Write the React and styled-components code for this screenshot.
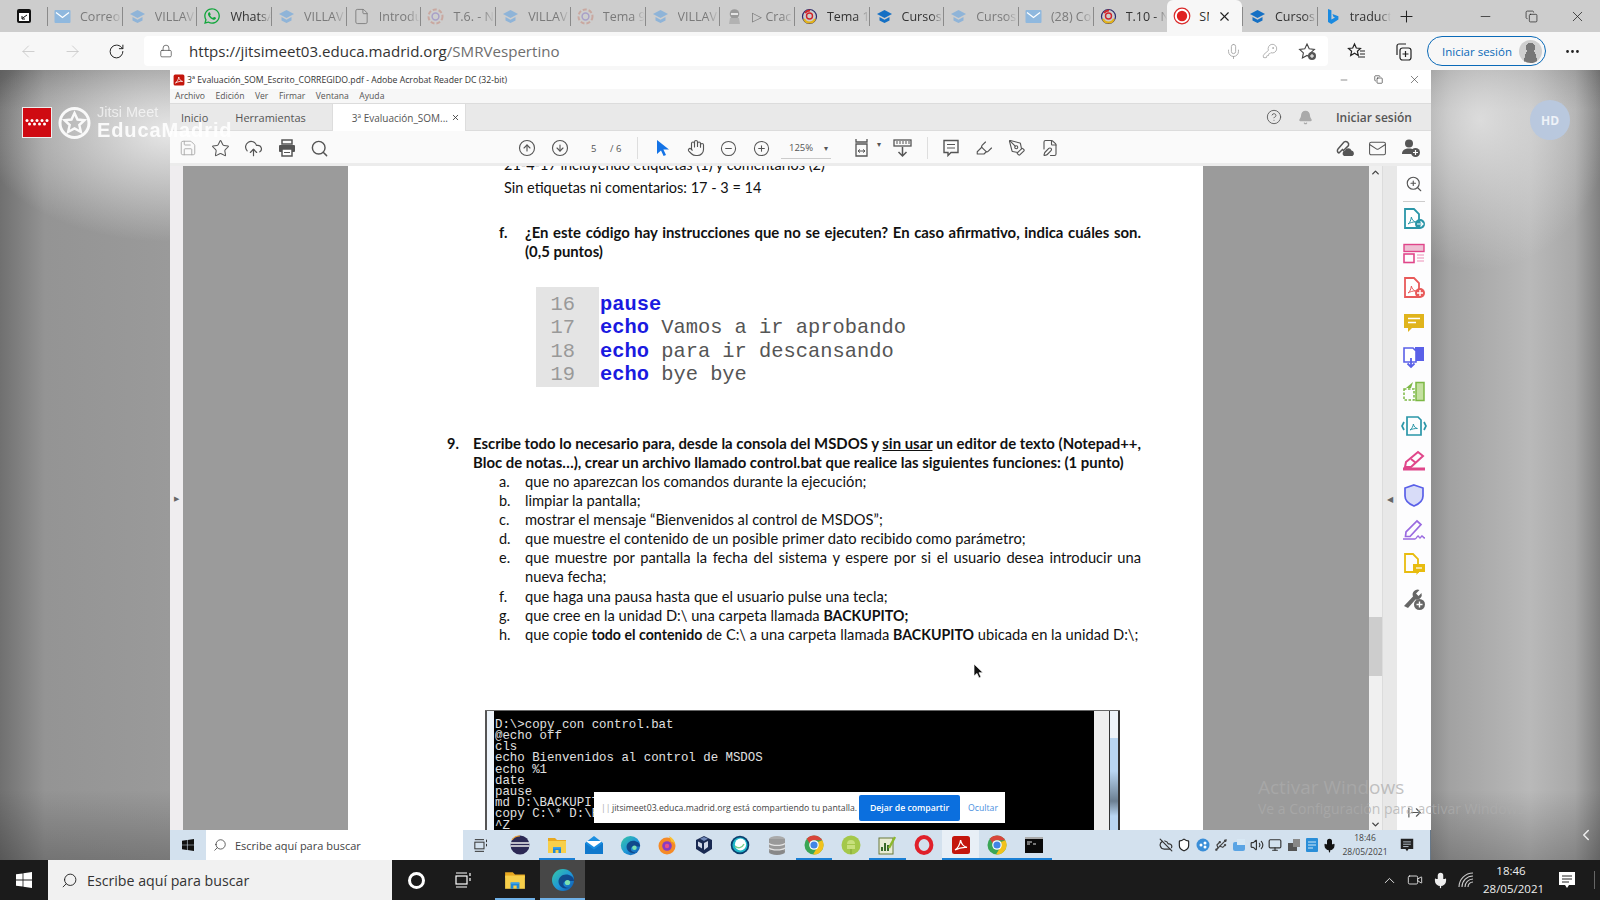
import React from 'react';
import styled, { createGlobalStyle } from 'styled-components';
import { FaWhatsapp } from 'react-icons/fa';
import {
  ArrowLeft, ArrowRight, RotateCw, Lock, Mic, KeyRound, Star, Plus, X, Minus, Copy, Ellipsis,
  CircleHelp, Bell, Save, CloudUpload, Search, CircleArrowUp, CircleArrowDown,
  Hand, CircleMinus, CirclePlus, Highlighter, PenTool, FilePen, Mail,
  ZoomIn, ArrowRightFromLine, ChevronUp, ChevronDown, ChevronLeft,
  Volume2, Usb, Monitor, CloudOff, Shield, Video, File,
} from 'lucide-react';

/* small drawn icons */
function MailIcon() {
  return (
    <svg width="17" height="17" viewBox="0 0 17 17">
      <rect x="0.5" y="2" width="16" height="13" rx="1" fill="#8fb8de" />
      <path d="M2 4.5l6.5 5 6.5-5" fill="none" stroke="#fff" strokeWidth="1.3" />
    </svg>
  );
}

function CapIcon({ dim }) {
  const fill = dim ? '#8fb4d8' : '#1570c4';
  return (
    <svg width="17" height="17" viewBox="0 0 17 17">
      <path d="M8.5 2L16 6l-7.5 4L1 6z" fill={fill} />
      <path d="M3.5 9v3.5l5 2.5 5-2.5V9l-5 2.8z" fill={fill} />
    </svg>
  );
}

function WheelIcon() {
  return (
    <svg width="17" height="17" viewBox="0 0 17 17" fill="none">
      <circle cx="8.5" cy="8.5" r="7" stroke="#c9a8a0" strokeWidth="2" strokeDasharray="4 2" />
      <circle cx="8.5" cy="8.5" r="3.4" stroke="#a8a0c8" strokeWidth="1.5" />
    </svg>
  );
}

function WheelBoldIcon() {
  return (
    <svg width="17" height="17" viewBox="0 0 17 17" fill="none">
      <circle cx="8.5" cy="8.5" r="7" stroke="#2a2a6a" strokeWidth="1.2" />
      <path d="M3 11a6 6 0 0 0 11 0" stroke="#e2b21c" strokeWidth="2" />
      <path d="M4 5a6 6 0 0 1 5-2.4" stroke="#d0242a" strokeWidth="2" />
      <circle cx="8.5" cy="8" r="3" stroke="#d0242a" strokeWidth="1.4" />
    </svg>
  );
}

function GhostIcon() {
  return (
    <svg width="17" height="17" viewBox="0 0 17 17">
      <circle cx="8.5" cy="6" r="4.8" fill="#9a9a9a" />
      <path d="M4 10h9l1 6H3z" fill="#b2b2b2" />
      <rect x="5" y="5" width="7" height="2" fill="#e4e4e4" />
    </svg>
  );
}

function RecIcon() {
  return (
    <svg width="18" height="18" viewBox="0 0 18 18">
      <circle cx="9" cy="9" r="7.8" fill="#fff" stroke="#d92a2a" strokeWidth="1.2" />
      <circle cx="9" cy="9" r="5.2" fill="#e02020" />
    </svg>
  );
}

function BingIcon() {
  return (
    <svg width="17" height="17" viewBox="0 0 17 17">
      <path d="M4 1l3.4 1.2v9.4l3.6-2-1.6-.9-1-2.6 6 2.1v3.2L7.4 16 4 14z" fill="#1a8ae0" />
    </svg>
  );
}

function StarPlus() {
  return (
    <svg width="19" height="19" viewBox="0 0 19 19" fill="none" stroke="#444" strokeWidth="1.1">
      <path d="M9 2l2.200 4.800 5.200.6-3.800 3.500 1 5.100L9 13.400 4.400 16l1-5.100L1.600 7.400l5.200-.6z" />
      <circle cx="14" cy="14" r="4" fill="#555" stroke="none" />
      <path d="M12 14h4M14 12v4" stroke="#fff" strokeWidth="1" />
    </svg>
  );
}

function FavList() {
  return (
    <svg width="19" height="19" viewBox="0 0 19 19" fill="none" stroke="#222" strokeWidth="1.200">
      <path d="M7.500 2l1.800 4 4.200.5-3.100 2.800.9 4.200-3.800-2.200-3.800 2.200.9-4.200L1.500 6.500l4.200-.5z" />
      <path d="M13 9h5M13 12h5M11 15h7" />
    </svg>
  );
}

function Collections() {
  return (
    <svg width="19" height="19" viewBox="0 0 19 19" fill="none" stroke="#222" strokeWidth="1.200">
      <path d="M4 13V4a2 2 0 0 1 2-2h7" />
      <rect x="7" y="6" width="11" height="12" rx="2.500" />
      <path d="M12.500 9v6M9.500 12h6" />
    </svg>
  );
}

function WindowsLogo({ size = 16, color = '#fff' }) {
  return (
    <svg width={size} height={size} viewBox="0 0 16 16" fill={color}>
      <path d="M0 2.3L6.6 1.4v6.2H0zM7.4 1.3L16 0v7.6H7.4zM0 8.4h6.6v6.2L0 13.7zM7.4 8.4H16V16l-8.6-1.3z" />
    </svg>
  );
}

function EdgeLogo({ size = 22, id = 'e' }) {
  return (
    <svg width={size} height={size} viewBox="0 0 24 24">
      <defs>
        <linearGradient id={id} x1="0" y1="0" x2="1" y2="1">
          <stop offset="0" stopColor="#37c9a4" />
          <stop offset="0.55" stopColor="#1f96d8" />
          <stop offset="1" stopColor="#0c4fa8" />
        </linearGradient>
      </defs>
      <circle cx="12" cy="12" r="11" fill={`url(#${id})`} />
      <path d="M23 13c0-4-4-6.5-8-6.5-4.5 0-7.5 3.5-7.5 7 0 4 3.5 7 7 7 1 0 2.5-.3 3.5-.8-2 .4-5.6-.6-5.6-3.6 0-1.8 1.5-3 3-3h7.4z" fill="#0e3d80" opacity="0.85" />
      <circle cx="16.5" cy="14.5" r="2.6" fill="#7be0b0" />
    </svg>
  );
}

function FolderLogo({ size = 20 }) {
  return (
    <svg width={size} height={size} viewBox="0 0 20 20">
      <path d="M1 3h7l2 2h9v3H1z" fill="#e8a820" />
      <rect x="1" y="6" width="18" height="12" fill="#f7cf4a" />
      <path d="M6 18v-5h8v5h-2.5v-3h-3v3z" fill="#1f88d8" />
      <rect x="6" y="12" width="8" height="1.6" fill="#3aa0e8" />
    </svg>
  );
}

function ChromeLogo() {
  return (
    <svg width="20" height="20" viewBox="0 0 20 20">
      <circle cx="10" cy="10" r="9.5" fill="#3aa655" />
      <path d="M10 .5a9.5 9.5 0 0 1 8.3 4.8H10a4.8 4.8 0 0 0-4.4 3L2.8 3.8A9.5 9.5 0 0 1 10 .5z" fill="#d8453a" />
      <path d="M18.3 5.3A9.5 9.5 0 0 1 9 19.4l4.2-7A4.8 4.8 0 0 0 13.9 7z" fill="#f2c21c" />
      <circle cx="10" cy="10" r="4.8" fill="#fff" />
      <circle cx="10" cy="10" r="3.6" fill="#4285e4" />
    </svg>
  );
}

function EclipseLogo() {
  return (
    <svg width="20" height="20" viewBox="0 0 20 20">
      <circle cx="10" cy="10" r="9.5" fill="#2c2955" />
      <path d="M1 8h18M.6 11h18.8" stroke="#eee" strokeWidth="1.6" />
      <path d="M2 5a9 9 0 0 1 8-4" stroke="#f0a030" strokeWidth="1.2" fill="none" />
    </svg>
  );
}

function MailApp() {
  return (
    <svg width="20" height="20" viewBox="0 0 20 20">
      <path d="M1 8l9-7 9 7v11H1z" fill="#1b8ee0" />
      <path d="M3 7l7 5 7-5v-1H3z" fill="#fff" />
      <path d="M1 8l9 6.5L19 8v11H1z" fill="#0f78cc" />
    </svg>
  );
}

function FirefoxLogo() {
  return (
    <svg width="20" height="20" viewBox="0 0 20 20">
      <circle cx="10" cy="11" r="8.5" fill="#f58a26" />
      <path d="M12 1c4 2 6 5 6.2 9-1-2-2.5-3-4-3.4z" fill="#fbc02d" />
      <circle cx="10" cy="11" r="4.8" fill="#8a3bc4" />
      <circle cx="10" cy="11" r="2.2" fill="#e84e8a" />
    </svg>
  );
}

function BoxLogo() {
  return (
    <svg width="20" height="20" viewBox="0 0 20 20">
      <path d="M10 1l8 4v9l-8 5-8-5V5z" fill="#1a2a52" />
      <path d="M10 8l4-2v6l-4 3zM4 6.5l4 2v5l-4-2.5z" fill="#d0d8e8" />
      <path d="M6 3.8L10 2l4 1.8L10 6z" fill="#7088b8" />
    </svg>
  );
}

function RingLogo() {
  return (
    <svg width="20" height="20" viewBox="0 0 20 20">
      <circle cx="10" cy="10" r="9.3" fill="#0b3f6e" />
      <circle cx="10" cy="10" r="7.6" fill="#1fb5c8" />
      <ellipse cx="10.5" cy="9.5" rx="5.6" ry="6" fill="#fff" />
      <path d="M5 11c3 3 7 2 9-2" stroke="#7bd08a" strokeWidth="1.4" fill="none" />
    </svg>
  );
}

function DbLogo() {
  return (
    <svg width="20" height="20" viewBox="0 0 20 20">
      <ellipse cx="10" cy="4" rx="8" ry="3" fill="#aaa" />
      <rect x="2" y="4" width="16" height="13" fill="#999" />
      <ellipse cx="10" cy="17" rx="8" ry="3" fill="#888" />
      <path d="M2 8.5c3 2.5 13 2.5 16 0M2 13c3 2.5 13 2.5 16 0" stroke="#e4e4e4" strokeWidth="1.2" fill="none" />
    </svg>
  );
}

function DroidLogo() {
  return (
    <svg width="20" height="20" viewBox="0 0 20 20">
      <circle cx="10" cy="10" r="9.5" fill="#a4c84a" />
      <path d="M6 9a4 4 0 0 1 8 0zM6 10h8v4H6z" fill="#c8e07c" />
      <path d="M10 14v5" stroke="#86a838" strokeWidth="1.2" />
    </svg>
  );
}

function ChartApp() {
  return (
    <svg width="20" height="20" viewBox="0 0 20 20">
      <rect x="2" y="3" width="14" height="16" fill="#e8ecd4" stroke="#6a7a3a" />
      <path d="M5 16v-4M8 16V8M11 16v-6" stroke="#3a6a2a" strokeWidth="2" />
      <path d="M12 13l6-11" stroke="#8cb82c" strokeWidth="2.4" />
    </svg>
  );
}

function OperaLogo() {
  return (
    <svg width="20" height="20" viewBox="0 0 20 20">
      <ellipse cx="10" cy="10" rx="7.4" ry="8" fill="none" stroke="#e0202a" strokeWidth="4" />
    </svg>
  );
}

function AcrobatLogo({ size = 20 }) {
  return (
    <svg width={size} height={size} viewBox="0 0 20 20">
      <rect x="1" y="1" width="18" height="18" rx="2.5" fill="#c4160c" />
      <path d="M4 15c3-2 5-6 5.6-10 .6 4 3 6.5 6.4 7.4-4-.4-8 .4-12 2.6z" fill="none" stroke="#fff" strokeWidth="1.3" />
    </svg>
  );
}

function CmdApp() {
  return (
    <svg width="20" height="20" viewBox="0 0 20 20">
      <rect x="1" y="2" width="18" height="16" fill="#0a0a0a" />
      <rect x="1" y="2" width="18" height="2" fill="#aaa" />
      <path d="M3 7h5M3 9h3M9 9h3" stroke="#ddd" strokeWidth="1" />
    </svg>
  );
}

function MadridFlag() {
  const stars = [4, 9, 14, 19, 24];
  return (
    <svg width="30" height="31" viewBox="0 0 30 31">
      <rect x="0.5" y="0.5" width="29" height="30" fill="#cf0a12" stroke="#eee" />
      {stars.map((x) => <circle key={x} cx={x + 1} cy="13.5" r="1.5" fill="#fff" />)}
      {stars.slice(0, 4).map((x) => <circle key={x} cx={x + 3.5} cy="17" r="1.5" fill="#fff" />)}
    </svg>
  );
}

function JitsiMark() {
  return (
    <svg width="33" height="32" viewBox="0 0 33 32" fill="none" stroke="#fff" opacity="0.92">
      <circle cx="16.5" cy="16" r="14.5" strokeWidth="3" />
      <path d="M16.5 6l3 6.5 7 .7-5.2 4.8 1.6 7-6.4-3.6-6.4 3.6 1.6-7-5.2-4.8 7-.7z" strokeWidth="2.4" />
    </svg>
  );
}

function CursorArrow() {
  return (
    <svg width="11" height="16" viewBox="0 0 11 16">
      <path d="M1 1v12l3-2.6 2 4.6 2-.9-2-4.4h4z" fill="#111" stroke="#fff" strokeWidth="0.7" />
    </svg>
  );
}

function PointerIcon() {
  return (
    <svg width="15" height="18" viewBox="0 0 15 18">
      <path d="M2 1v14l4-3.6 2.6 5.6 2.4-1-2.6-5.4H14z" fill="#1473e6" />
    </svg>
  );
}

function PrinterIcon() {
  return (
    <svg width="18" height="18" viewBox="0 0 18 18">
      <path d="M4 1h10v4H4z" fill="none" stroke="#555" strokeWidth="1.500" />
      <rect x="1" y="6" width="16" height="7" rx="1" fill="#555" />
      <rect x="4" y="10" width="10" height="7" fill="#fff" stroke="#555" strokeWidth="1.500" />
      <path d="M6 13.500h6" stroke="#555" />
    </svg>
  );
}

function CommentLines() {
  return (
    <svg width="18" height="18" viewBox="0 0 18 18" fill="none" stroke="#555" strokeWidth="1.400">
      <path d="M2 1.500h14v12H9l-3 3v-3H2z" />
      <path d="M5 5.500h8M5 9h8" strokeWidth="1.100" />
    </svg>
  );
}

function UserAdd() {
  return (
    <svg width="20" height="20" viewBox="0 0 20 20">
      <circle cx="8" cy="5.500" r="4" fill="#555" />
      <path d="M1 16c0-4 3-5.500 7-5.500s5 1 5.500 2.500l-2 3z" fill="#555" />
      <circle cx="14.500" cy="14.500" r="4.500" fill="#555" />
      <path d="M12 14.500h5M14.500 12v5" stroke="#fff" strokeWidth="1.200" />
    </svg>
  );
}

function LinkCloud() {
  return (
    <svg width="20" height="20" viewBox="0 0 20 20">
      <g fill="none" stroke="#555" strokeWidth="1.500">
        <path d="M8 11l-4 4a2.500 2.500 0 0 1-1-4l6-7a3 3 0 0 1 4.500 3.500L8 13" />
      </g>
      <path d="M9 18a3 3 0 0 1 1-5.500 3.500 3.500 0 0 1 6.500 0 3 3 0 0 1 1 5.500z" fill="#555" />
    </svg>
  );
}

function FitPageIcon() {
  return (
    <svg width="20" height="20" viewBox="0 0 20 20" fill="none" stroke="#555" strokeWidth="1.3">
      <path d="M2 1v3h11V1M2 6h11v12H2z" />
      <path d="M4 13h7M4 13l2-1.6M4 13l2 1.6M11 13l-2-1.6M11 13l-2 1.6" strokeWidth="1" />
    </svg>
  );
}

function MeasureDownIcon() {
  return (
    <svg width="20" height="20" viewBox="0 0 20 20" fill="none" stroke="#555" strokeWidth="1.3">
      <rect x="1" y="2" width="17" height="6" />
      <path d="M4 3v3M7 3v3M10 3v3M13 3v3M16 3v3" strokeWidth="1" />
      <path d="M9.5 9v9M5.5 14l4 4 4-4" strokeWidth="1.5" />
    </svg>
  );
}

/* right hand tools panel: a page with a round badge */
function DocBadge({ color, badge }) {
  return (
    <svg width="24" height="22" viewBox="0 0 24 22" fill="none">
      <path d="M3 1h9l5 5v14H3z" stroke={color} strokeWidth="1.8" fill="#fff" />
      <path d="M6 16c2-1.5 3-4 3.4-7 .6 3 2 4.4 4.4 5-3-.2-5.400.6-7.800 2z" stroke={color} strokeWidth="1" />
      {badge && <circle cx="18" cy="16" r="5" fill={color} />}
      {badge === 'arrow' && <path d="M15 16h6M18.500 13.500l2.500 2.500-2.500 2.500" stroke="#fff" strokeWidth="1.2" />}
      {badge === 'plus' && <path d="M15 16h6M18 13v6" stroke="#fff" strokeWidth="1.4" />}
    </svg>
  );
}

function FormsTool() {
  return (
    <svg width="24" height="22" viewBox="0 0 24 22" fill="none">
      <rect x="2" y="1.500" width="20" height="7" fill="#eec0d4" stroke="#e0468a" strokeWidth="1.4" />
      <rect x="2" y="11" width="10" height="8.500" stroke="#e0468a" strokeWidth="1.600" />
      <path d="M15 12h7M15 15h7M15 18h7" stroke="#ee90b8" strokeWidth="1.2" />
    </svg>
  );
}

function CommentTool() {
  return (
    <svg width="24" height="22" viewBox="0 0 24 22">
      <path d="M2 2h20v14H10l-4 4v-4H2z" fill="#e0b41c" />
      <path d="M6 6.500h12M6 10.500h8" stroke="#fff" strokeWidth="1.600" />
    </svg>
  );
}

function ExportTool() {
  return (
    <svg width="24" height="24" viewBox="0 0 24 24" fill="none">
      <path d="M13 2h9v14H13z" fill="#5a60e8" />
      <path d="M2 3h9l3 3v11H2z" fill="#fff" stroke="#5a60e8" strokeWidth="1.600" />
      <path d="M9 13v9M5.500 18.500L9 22l3.500-3.500" stroke="#5a60e8" strokeWidth="1.800" />
    </svg>
  );
}

function CompareTool() {
  return (
    <svg width="24" height="22" viewBox="0 0 24 22" fill="none">
      <rect x="14" y="1.500" width="8" height="18" fill="#c4e0a0" stroke="#7cb844" strokeWidth="1.500" />
      <rect x="2" y="8" width="10" height="11" stroke="#7cb844" strokeWidth="1.500" strokeDasharray="2.500 1.500" />
      <path d="M11 1l-7 6h5z" fill="#7cb844" />
    </svg>
  );
}

function ScanTool() {
  return (
    <svg width="26" height="22" viewBox="0 0 26 22" fill="none">
      <path d="M6 2h11l3 3v15H6z" stroke="#2a96a8" strokeWidth="1.700" />
      <path d="M3 7L1 11l2 4M23 7l2 4-2 4" stroke="#2a96a8" strokeWidth="1.700" />
      <path d="M9 15c2-1.500 3-3.500 3.400-6 .5 2.500 1.700 4 4 4.500-2.700 0-5 .3-7.400 1.500z" stroke="#2a96a8" />
    </svg>
  );
}

function RedactTool() {
  return (
    <svg width="24" height="22" viewBox="0 0 24 22">
      <path d="M16 2l5 4L9 17l-6 0 1-5z" fill="none" stroke="#e0468a" strokeWidth="2" />
      <path d="M9 9l5 4" stroke="#e0468a" strokeWidth="2" />
      <rect x="1" y="17.500" width="22" height="3" fill="#e0468a" />
    </svg>
  );
}

function ShieldTool() {
  return (
    <svg width="24" height="24" viewBox="0 0 24 24">
      <path d="M12 2l9 3v8c0 5-4 8-9 10-5-2-9-5-9-10V5z" fill="#d8dcf8" stroke="#5a60e8" strokeWidth="1.700" />
    </svg>
  );
}

function SignTool() {
  return (
    <svg width="26" height="22" viewBox="0 0 26 22" fill="none" stroke="#9a6ae0" strokeWidth="1.700">
      <path d="M16 2l4 3.500-11 12H4.500l.5-4.500z" />
      <path d="M2 20h12c1.500 0 2-3 3-3s1 2 2 2 1-2 2-2 1 2 3 2" strokeWidth="1.400" />
    </svg>
  );
}

function NoteDocTool() {
  return (
    <svg width="24" height="24" viewBox="0 0 24 24" fill="none">
      <path d="M3 2h8l5 5v13H3z" stroke="#e8bc10" strokeWidth="1.800" />
      <path d="M11 12h12v8h-6l-2.500 3v-3H11z" fill="#e8bc10" />
      <path d="M14 16h6" stroke="#fff" strokeWidth="1.200" />
    </svg>
  );
}

function WrenchTool() {
  return (
    <svg width="24" height="24" viewBox="0 0 24 24">
      <path d="M2 19L11 9.500a5 5 0 0 1 6.500-6.500l-3.500 3.500 2.500 2.500 3-3a5 5 0 0 1-6 6.500L6 21z" fill="#666" />
      <circle cx="17.500" cy="17.500" r="5.500" fill="#666" />
      <path d="M14.500 17.500h6M17.500 14.500v6" stroke="#fff" strokeWidth="1.400" />
    </svg>
  );
}

function NotifIcon({ size = 18, color = '#fff' }) {
  return (
    <svg width={size} height={size} viewBox="0 0 18 18">
      <path d="M1 1h16v13h-6l-2 3-2-3H1z" fill={color} />
      <path d="M4 5h10M4 8h10M4 11h7" stroke={color === '#fff' ? '#222' : '#d3e1ee'} strokeWidth="1" />
    </svg>
  );
}

function WifiCorner() {
  return (
    <svg width="16" height="16" viewBox="0 0 16 16" fill="none" stroke="#ccc" strokeWidth="1.100">
      <path d="M1 15A14 14 0 0 1 15 1M4 15A11 11 0 0 1 15 4M7 15a8 8 0 0 1 8-8M10 15a5 5 0 0 1 5-5" />
    </svg>
  );
}

const tabs = [
  { icon: <MailIcon />, label: 'Correo' },
  { icon: <CapIcon dim />, label: 'VILLAV' },
  { icon: <FaWhatsapp size={18} color="#12a63c" />, label: 'WhatsA', dark: true },
  { icon: <CapIcon dim />, label: 'VILLAV' },
  { icon: <File size={17} strokeWidth={1.200} color="#777" />, label: 'Introdu' },
  { icon: <WheelIcon />, label: 'T.6. - N' },
  { icon: <CapIcon dim />, label: 'VILLAV' },
  { icon: <WheelIcon />, label: 'Tema 9' },
  { icon: <CapIcon dim />, label: 'VILLAV' },
  { icon: <GhostIcon />, label: '▷ Crac' },
  { icon: <WheelBoldIcon />, label: 'Tema 1', dark: true },
  { icon: <CapIcon />, label: 'Cursos', dark: true },
  { icon: <CapIcon dim />, label: 'Cursos' },
  { icon: <MailIcon />, label: '(28) Co' },
  { icon: <WheelBoldIcon />, label: 'T.10 - N', dark: true },
  { icon: <RecIcon />, label: 'SM', active: true },
  { icon: <CapIcon />, label: 'Cursos', dark: true },
  { icon: <BingIcon />, label: 'traduct', dark: true },
];

const toolIcons = [
  <DocBadge color="#2a96a8" badge="arrow" />,
  <FormsTool />,
  <DocBadge color="#e85a5a" badge="plus" />,
  <CommentTool />,
  <ExportTool />,
  <CompareTool />,
  <ScanTool />,
  <RedactTool />,
  <ShieldTool />,
  <SignTool />,
  <NoteDocTool />,
  <WrenchTool />,
];

const apps = [
  { icon: <EclipseLogo /> },
  { icon: <FolderLogo />, open: true },
  { icon: <MailApp /> },
  { icon: <EdgeLogo size={21} id="e2" /> },
  { icon: <FirefoxLogo /> },
  { icon: <BoxLogo /> },
  { icon: <RingLogo /> },
  { icon: <DbLogo /> },
  { icon: <ChromeLogo />, open: true },
  { icon: <DroidLogo /> },
  { icon: <ChartApp />, open: true },
  { icon: <OperaLogo /> },
  { icon: <AcrobatLogo />, open: true, current: true },
  { icon: <ChromeLogo />, open: true },
  { icon: <CmdApp />, open: true },
];

const traySmall = [
  <CloudOff size={14} color="#333" />,
  <Shield size={14} color="#222" fill="#fff" />,
  <svg width="14" height="14" viewBox="0 0 14 14"><circle cx="7" cy="7" r="6.500" fill="#3a8ed8" /><circle cx="5" cy="7" r="1.500" fill="#fff" /><circle cx="9" cy="5" r="1.500" fill="#fff" /><circle cx="9" cy="9" r="1.500" fill="#fff" /></svg>,
  <Usb size={14} color="#444" />,
  <svg width="14" height="14" viewBox="0 0 14 14"><rect x="1" y="4" width="12" height="9" rx="2" fill="#5aa4e4" /><rect x="5" y="1" width="8" height="6" fill="#d8e8f4" /></svg>,
  <Volume2 size={14} color="#333" />,
  <Monitor size={14} color="#333" />,
  <svg width="14" height="14" viewBox="0 0 14 14"><rect x="1" y="5" width="9" height="8" fill="#555" /><rect x="6" y="1" width="7" height="8" fill="#888" /></svg>,
  <svg width="14" height="16" viewBox="0 0 14 16"><rect x="1" y="1" width="12" height="14" rx="1" fill="#2a8ed8" /><path d="M3 5h8M3 8h8M3 11h5" stroke="#cfe8f8" /></svg>,
  <Mic size={15} color="#111" fill="#111" />,
];

function PageLine({ mark, children }) {
  return (
    <ListRow>
      <Mark>{mark}</Mark>
      <LineBody>{children}</LineBody>
    </ListRow>
  );
}

function App() {
  return (
    <Screen>
      <GlobalStyle />
      <TabStrip>
        <AppGlyph>
          <svg width="16" height="16" viewBox="0 0 16 16">
            <rect x="1" y="1" width="14" height="14" rx="2" fill="#111" />
            <rect x="3" y="5" width="10" height="8" fill="#fff" />
            <path d="M11 7L6 10.500M6 8v3h3" stroke="#111" fill="none" />
          </svg>
        </AppGlyph>
        {tabs.map((t, i) => (
          <Tab key={i} $active={t.active}>
            {t.icon}
            <TabLabel $dark={t.dark || t.active} $active={t.active}>{t.label}</TabLabel>
            {t.active && <TabClose><X size={15} strokeWidth={1.800} color="#222" /></TabClose>}
          </Tab>
        ))}
        <NewTab><Plus size={19} strokeWidth={1.300} color="#222" /></NewTab>
        <WinControls>
          <WinBtn><Minus size={15} strokeWidth={1.200} color="#222" /></WinBtn>
          <WinBtn><Copy size={13} strokeWidth={1.300} color="#222" /></WinBtn>
          <WinBtn><X size={17} strokeWidth={1.100} color="#222" /></WinBtn>
        </WinControls>
      </TabStrip>

      <NavBar>
        <NavBtn><ArrowLeft size={19} strokeWidth={1} color="#c4c4c4" /></NavBtn>
        <NavBtn><ArrowRight size={19} strokeWidth={1} color="#c4c4c4" /></NavBtn>
        <NavBtn><RotateCw size={17} strokeWidth={1.400} color="#222" /></NavBtn>
        <AddressBar>
          <Lock size={14} strokeWidth={1.200} color="#444" />
          <Url>https://jitsimeet03.educa.madrid.org<UrlTail>/SMRVespertino</UrlTail></Url>
          <AddressIcons>
            <Mic size={17} strokeWidth={1.100} color="#999" />
            <KeyRound size={16} strokeWidth={1.100} color="#999" />
            <StarPlus />
          </AddressIcons>
        </AddressBar>
        <NavBtn $wide $ml={5}><FavList /></NavBtn>
        <NavBtn $wide><Collections /></NavBtn>
        <SignInPill>
          Iniciar sesión
          <Avatar />
        </SignInPill>
        <NavBtn $wide $ml={3}><Ellipsis size={17} strokeWidth={2} color="#222" /></NavBtn>
      </NavBar>

      <Stage>
        <Brand>
          <MadridFlag />
          <JitsiMark />
          <BrandText>
            <BrandTop>Jitsi Meet</BrandTop>
            <BrandName>EducaMadrid</BrandName>
          </BrandText>
        </Brand>

        <LeftRail />

        <AcrobatWindow>
          <AcrobatTitle>
            <AcrobatLogo size={12} />
            <TitleText>3ª Evaluación_SOM_Escrito_CORREGIDO.pdf - Adobe Acrobat Reader DC (32-bit)</TitleText>
            <WinControlsSmall>
              <Minus size={10} strokeWidth={1.300} color="#333" />
              <Copy size={9} strokeWidth={1.500} color="#111" />
              <X size={13} strokeWidth={1.100} color="#333" />
            </WinControlsSmall>
          </AcrobatTitle>
          <MenuBar>
            {['Archivo', 'Edición', 'Ver', 'Firmar', 'Ventana', 'Ayuda'].map((m) => <MenuItem key={m}>{m}</MenuItem>)}
          </MenuBar>
          <DocTabs>
            <DocTab>Inicio</DocTab>
            <DocTab>Herramientas</DocTab>
            <ActiveDocTab>
              3ª Evaluación_SOM...
              <X size={9} strokeWidth={2.200} color="#333" />
            </ActiveDocTab>
            <DocTabsRight>
              <CircleHelp size={16} strokeWidth={1.300} color="#555" />
              <Bell size={15} color="#aaa" fill="#aaa" />
              <SignInText>Iniciar sesión</SignInText>
            </DocTabsRight>
          </DocTabs>

          <AcrobatTools>
            <ToolSlot $dim><Save size={18} strokeWidth={1.200} /></ToolSlot>
            <ToolSlot><Star size={19} strokeWidth={1.300} /></ToolSlot>
            <ToolSlot><CloudUpload size={19} strokeWidth={1.500} /></ToolSlot>
            <ToolSlot><PrinterIcon /></ToolSlot>
            <ToolSlot><Search size={19} strokeWidth={1.800} /></ToolSlot>
            <ToolSlot $ml={174}><CircleArrowUp size={18} strokeWidth={1.500} /></ToolSlot>
            <ToolSlot><CircleArrowDown size={18} strokeWidth={1.500} /></ToolSlot>
            <PageBox><PageNum>5</PageNum><PageTotal>/ 6</PageTotal></PageBox>
            <ToolSep />
            <ToolSlot><PointerIcon /></ToolSlot>
            <ToolSlot><Hand size={18} strokeWidth={1.500} /></ToolSlot>
            <ToolSlot><CircleMinus size={17} strokeWidth={1.500} /></ToolSlot>
            <ToolSlot><CirclePlus size={17} strokeWidth={1.500} /></ToolSlot>
            <ZoomBox>125%<ZoomCaret>▾</ZoomCaret></ZoomBox>
            <ToolSlot $ml={16}><FitPageIcon /><SlotCaret>▾</SlotCaret></ToolSlot>
            <ToolSlot $ml={6}><MeasureDownIcon /></ToolSlot>
            <ToolSep />
            <ToolSlot $ml={-2}><CommentLines /></ToolSlot>
            <ToolSlot><Highlighter size={18} strokeWidth={1.500} /></ToolSlot>
            <ToolSlot><PenTool size={18} strokeWidth={1.500} /></ToolSlot>
            <ToolSlot><FilePen size={18} strokeWidth={1.500} /></ToolSlot>
            <ToolsRight>
              <ToolSlot><LinkCloud /></ToolSlot>
              <ToolSlot><Mail size={19} strokeWidth={1.300} /></ToolSlot>
              <ToolSlot><UserAdd /></ToolSlot>
            </ToolsRight>
          </AcrobatTools>

          <DocArea>
            <SideStrip><RailArrow>▶</RailArrow></SideStrip>
            <GreyGutter $w={165} />
            <Page>
              <ClippedLine>21-4-17 incluyendo etiquetas (1) y comentarios (2)</ClippedLine>
              <PlainLine>Sin etiquetas ni comentarios: 17 - 3 = 14</PlainLine>

              <QuestionF>
                <Mark>f.</Mark>
                <BoldBody>¿En este código hay instrucciones que no se ejecuten? En caso afirmativo, indica cuáles son. (0,5 puntos)</BoldBody>
              </QuestionF>

              <CodeImage>
                <CodeGutter>
                  {[16, 17, 18, 19].map((n) => <div key={n}>{n}</div>)}
                </CodeGutter>
                <CodeText>
                  <div><Keyword>pause</Keyword></div>
                  <div><Keyword>echo</Keyword> Vamos a ir aprobando</div>
                  <div><Keyword>echo</Keyword> para ir descansando</div>
                  <div><Keyword>echo</Keyword> bye bye</div>
                </CodeText>
              </CodeImage>

              <Question>
                <QNum>9.</QNum>
                <BoldBody>
                  Escribe todo lo necesario para, desde la consola del MSDOS y <u>sin usar</u> un editor de texto (Notepad++, Bloc de notas…), crear un archivo llamado control.bat que realice las siguientes funciones: (1 punto)
                </BoldBody>
              </Question>

              <SubList>
                <PageLine mark="a.">que no aparezcan los comandos durante la ejecución;</PageLine>
                <PageLine mark="b.">limpiar la pantalla;</PageLine>
                <PageLine mark="c.">mostrar el mensaje “Bienvenidos al control de MSDOS”;</PageLine>
                <PageLine mark="d.">que muestre el contenido de un posible primer dato recibido como parámetro;</PageLine>
                <PageLine mark="e.">que muestre por pantalla la fecha del sistema y espere por si el usuario desea introducir una nueva fecha;</PageLine>
                <PageLine mark="f.">que haga una pausa hasta que el usuario pulse una tecla;</PageLine>
                <PageLine mark="g.">que cree en la unidad D:\ una carpeta llamada <b>BACKUPITO;</b></PageLine>
                <PageLine mark="h.">que copie <b>todo el contenido</b> de C:\ a una carpeta llamada <b>BACKUPITO</b> ubicada en la unidad D:\;</PageLine>
              </SubList>

              <ConsoleShot>
                <ConsoleEdge />
                <ConsoleScreen>
                  {`D:\\>copy con control.bat
@echo off
cls
echo Bienvenidos al control de MSDOS
echo %1
date
pause
md D:\\BACKUPITO
copy C:\\* D:\\BACKUPITO
^Z`}
                </ConsoleScreen>
                <ConsoleGap />
                <ConsoleScroll />
              </ConsoleShot>

              <Cursor><CursorArrow /></Cursor>
            </Page>
            <GreyGutter $w={166} />
            <VScroll>
              <ChevronUp size={11} strokeWidth={3} color="#444" />
              <VThumb />
              <VBottom><ChevronDown size={11} strokeWidth={3} color="#444" /></VBottom>
            </VScroll>
            <CollapseStrip><RailArrow $left>◀</RailArrow></CollapseStrip>
            <ToolsPanel>
              <ZoomIn size={18} strokeWidth={1.500} color="#555" />
              <PanelRule />
              {toolIcons.map((icon, i) => <PanelSlot key={i}>{icon}</PanelSlot>)}
              <PanelExit><ArrowRightFromLine size={15} strokeWidth={1.800} color="#555" /></PanelExit>
            </ToolsPanel>

            <ShareBar>
              <Grip>||</Grip>
              <ShareText>jitsimeet03.educa.madrid.org está compartiendo tu pantalla.</ShareText>
              <StopShare>Dejar de compartir</StopShare>
              <HideShare>Ocultar</HideShare>
            </ShareBar>
          </DocArea>

          <InnerTaskbar>
            <InnerStart><WindowsLogo size={12} color="#111" /></InnerStart>
            <InnerSearch>
              <MirrorIcon><Search size={14} strokeWidth={1.300} color="#333" /></MirrorIcon>
              Escribe aquí para buscar
            </InnerSearch>
            <InnerTaskView><TaskViewGlyph color="#333" size={15} /></InnerTaskView>
            {apps.map((a, i) => (
              <InnerApp key={i} $open={a.open} $current={a.current}>{a.icon}</InnerApp>
            ))}
            <InnerTray>
              {traySmall.map((icon, i) => <TraySlot key={i}>{icon}</TraySlot>)}
              <InnerClock><div>18:46</div><div>28/05/2021</div></InnerClock>
              <NotifIcon size={14} color="#222" />
            </InnerTray>
          </InnerTaskbar>
        </AcrobatWindow>

        <RightRail>
          <HdAvatar>HD</HdAvatar>
          <SideChevron><ChevronLeft size={18} strokeWidth={2} color="#eee" /></SideChevron>
        </RightRail>

        <Watermark>
          <WatermarkTitle>Activar Windows</WatermarkTitle>
          <WatermarkSub>Ve a Configuración para activar Windows.</WatermarkSub>
        </Watermark>
      </Stage>

      <Taskbar>
        <StartButton><WindowsLogo size={16} /></StartButton>
        <SearchBox>
          <MirrorIcon><Search size={17} strokeWidth={1.300} color="#222" /></MirrorIcon>
          <SearchText>Escribe aquí para buscar</SearchText>
        </SearchBox>
        <BarIcon $w={48}><CortanaRing /></BarIcon>
        <BarIcon $w={48}><TaskViewGlyph color="#fff" size={18} /></BarIcon>
        <BarApp $ml={7} $w={40} $line><FolderLogo size={22} /></BarApp>
        <BarApp $ml={5} $w={45} $line $current><EdgeLogo size={24} id="e1" /></BarApp>
        <Tray>
          <ChevronUp size={17} strokeWidth={1.300} color="#eee" />
          <Video size={16} strokeWidth={1.300} color="#eee" />
          <Mic size={17} strokeWidth={1.800} color="#eee" fill="#eee" />
          <WifiCorner />
          <Clock><div>18:46</div><div>28/05/2021</div></Clock>
          <NotifBox><NotifIcon size={18} /></NotifBox>
        </Tray>
      </Taskbar>
    </Screen>
  );
}

function TaskViewGlyph({ color, size }) {
  return (
    <svg width={size} height={size} viewBox="0 0 18 18" fill="none" stroke={color} strokeWidth="1.200">
      <rect x="1" y="5" width="11" height="8" />
      <path d="M1 2h11M1 16h11M15 2v3M15 7v3" />
    </svg>
  );
}

export default App;

// styling Components

const GlobalStyle = createGlobalStyle`
  html, body { margin: 0; padding: 0; width: 1600px; height: 900px; overflow: hidden; }
  * { box-sizing: border-box; }
`;

const Screen = styled.div`
  width: 1600px;
  height: 900px;
  display: flex;
  flex-direction: column;
  font-family: 'Open Sans', 'Liberation Sans', sans-serif;
  overflow: hidden;
`;

const TabStrip = styled.div`
  height: 32px;
  flex: none;
  display: flex;
  align-items: stretch;
  background: #cdcdcd;
`;

const AppGlyph = styled.div`
  width: 47px;
  display: flex;
  align-items: center;
  justify-content: center;
`;

const Tab = styled.div`
  position: relative;
  width: 74.7px;
  padding-left: ${(p) => (p.$active ? '6px' : '7px')};
  display: flex;
  align-items: center;
  gap: ${(p) => (p.$active ? '8px' : '9px')};
  overflow: hidden;
  background: ${(p) => (p.$active ? '#f7f7f7' : 'transparent')};
  border-radius: ${(p) => (p.$active ? '6px 6px 0 0' : '0')};
  ${(p) => !p.$active && `
    &::before {
      content: '';
      position: absolute;
      left: 0;
      top: 7px;
      bottom: 6px;
      width: 1px;
      background: #8a8a8a;
    }
  `}
  & > svg { flex: none; }
`;

const TabLabel = styled.span`
  flex: 1;
  min-width: 0;
  font-size: 12.5px;
  white-space: nowrap;
  overflow: hidden;
  color: ${(p) => (p.$dark ? '#333' : '#7a7a7a')};
  ${(p) => (p.$active ? 'max-width: 17px;' : `
    -webkit-mask-image: linear-gradient(to right, #000 70%, transparent 100%);
  `)}
`;

const TabClose = styled.span`
  flex: none;
  display: flex;
  margin-right: 10px;
`;

const NewTab = styled.div`
  width: 30px;
  display: flex;
  align-items: center;
  justify-content: center;
`;

const WinControls = styled.div`
  margin-left: auto;
  display: flex;
`;

const WinBtn = styled.div`
  width: 46px;
  display: flex;
  align-items: center;
  justify-content: center;
`;

const NavBar = styled.div`
  height: 38px;
  flex: none;
  display: flex;
  align-items: center;
  padding: 0 6px;
  background: #f7f7f7;
`;

const NavBtn = styled.div`
  width: ${(p) => (p.$wide ? '46px' : '44px')};
  height: 30px;
  margin-left: ${(p) => p.$ml || 0}px;
  flex: none;
  display: flex;
  align-items: center;
  justify-content: center;
`;

const AddressBar = styled.div`
  width: 1184px;
  height: 30px;
  margin-left: 6px;
  padding: 0 0 0 15px;
  flex: none;
  display: flex;
  align-items: center;
  gap: 16px;
  background: #fff;
  border-radius: 4px;
`;

const Url = styled.div`
  font-size: 15.1px;
  color: #333;
  white-space: nowrap;
`;

const UrlTail = styled.span`
  color: #6e6e6e;
`;

const AddressIcons = styled.div`
  margin-left: auto;
  display: flex;
  align-items: center;
  gap: 20px;
  padding-right: 11px;
`;

const SignInPill = styled.div`
  width: 119px;
  height: 30px;
  margin-left: 2px;
  padding: 0 3px 0 14px;
  flex: none;
  display: flex;
  align-items: center;
  justify-content: space-between;
  font-size: 11.5px;
  color: #0a6ab8;
  border: 1.5px solid #0a6ab8;
  border-radius: 15px;
`;

const Avatar = styled.div`
  width: 23px;
  height: 23px;
  border-radius: 50%;
  background: radial-gradient(circle at 50% 32%, #777 0 24%, transparent 25%),
    radial-gradient(ellipse at 50% 92%, #777 0 38%, #cfcfcf 39%);
`;

const Stage = styled.div`
  position: relative;
  flex: 1;
  min-height: 0;
  display: flex;
  background:
    radial-gradient(ellipse 190px 110px at 170px 62px, rgba(235, 235, 235, 0.95), rgba(235, 235, 235, 0)),
    radial-gradient(ellipse 130px 150px at 1480px 50px, rgba(228, 228, 228, 0.85), rgba(228, 228, 228, 0)),
    linear-gradient(to bottom, rgba(0, 0, 0, 0.15) 0, rgba(0, 0, 0, 0) 40px, rgba(0, 0, 0, 0) 720px, rgba(0, 0, 0, 0.22) 790px),
    linear-gradient(to right, #707070 0, #949494 45px, #9a9a9a 170px, #8f8f8f 1431px, #a2a2a2 1450px, #b9b9b9 1530px, #a8a8a8 1575px, #808080 1600px);
`;

const LeftRail = styled.div`
  width: 170px;
  flex: none;
`;

const Brand = styled.div`
  position: absolute;
  left: 22px;
  top: 35px;
  z-index: 2;
  display: flex;
  align-items: center;
  gap: 6px;
  pointer-events: none;
`;

const BrandText = styled.div`
  color: #fff;
  font-family: 'Liberation Sans', sans-serif;
`;

const BrandTop = styled.div`
  font-size: 14.5px;
  line-height: 15px;
  opacity: 0.65;
`;

const BrandName = styled.div`
  font-size: 20px;
  line-height: 20px;
  font-weight: 700;
  letter-spacing: 0.9px;
  opacity: 0.9;
`;

const AcrobatWindow = styled.div`
  width: 1261px;
  flex: none;
  display: flex;
  flex-direction: column;
  background: #fff;
`;

const AcrobatTitle = styled.div`
  height: 19px;
  padding-left: 3px;
  display: flex;
  align-items: center;
  gap: 2px;
  background: #fff;
`;

const TitleText = styled.div`
  font-size: 8.7px;
  color: #333;
  white-space: nowrap;
`;

const WinControlsSmall = styled.div`
  margin-left: auto;
  width: 92px;
  padding-right: 10px;
  display: flex;
  align-items: center;
  justify-content: space-between;
`;

const MenuBar = styled.div`
  height: 14px;
  padding-left: 5px;
  display: flex;
  align-items: center;
  gap: 10.5px;
  background: #f7f7f7;
`;

const MenuItem = styled.span`
  font-size: 8.6px;
  color: #555;
`;

const DocTabs = styled.div`
  height: 28px;
  padding-left: 11px;
  display: flex;
  align-items: stretch;
  background: #e9e9e9;
  border-top: 1px solid #dcdcdc;
  border-bottom: 1px solid #dcdcdc;
`;

const DocTab = styled.div`
  margin-right: 27px;
  display: flex;
  align-items: center;
  font-size: 11px;
  color: #555;
`;

const ActiveDocTab = styled.div`
  width: 134px;
  margin-left: -1px;
  margin-bottom: -1px;
  padding: 0 5px 0 19px;
  display: flex;
  align-items: center;
  justify-content: space-between;
  font-size: 10px;
  color: #555;
  background: #fff;
  border-left: 1px solid #ddd;
  border-right: 1px solid #ddd;
`;

const DocTabsRight = styled.div`
  margin-left: auto;
  padding-right: 19px;
  display: flex;
  align-items: center;
  gap: 16px;
`;

const SignInText = styled.span`
  margin-left: 7px;
  font-size: 12px;
  font-weight: 600;
  color: #555;
`;

const AcrobatTools = styled.div`
  height: 35px;
  padding: 2px 4px 0 1px;
  display: flex;
  align-items: center;
  background: #fafafa;
  border-bottom: 3px solid #ececec;
`;

const ToolSlot = styled.div`
  position: relative;
  width: 33px;
  flex: none;
  display: flex;
  align-items: center;
  justify-content: center;
  margin-left: ${(p) => p.$ml || 0}px;
  color: ${(p) => (p.$dim ? '#a8a8a8' : '#555')};
`;

const SlotCaret = styled.span`
  position: absolute;
  right: -1px;
  top: 0;
  font-size: 8px;
  color: #555;
`;

const PageBox = styled.div`
  width: 53px;
  height: 22px;
  padding-left: 15px;
  flex: none;
  display: flex;
  align-items: center;
  gap: 13px;
  font-size: 9.500px;
  color: #555;
`;

const PageNum = styled.span`
  width: 6px;
`;

const PageTotal = styled.span`
  white-space: nowrap;
`;

const ToolSep = styled.div`
  width: 1px;
  height: 22px;
  margin: 0 8px;
  flex: none;
  background: #dedede;
`;

const ZoomBox = styled.div`
  width: 50px;
  height: 22px;
  margin-left: 3px;
  padding: 0 3px 0 8px;
  flex: none;
  display: flex;
  align-items: center;
  justify-content: space-between;
  font-size: 9.500px;
  color: #555;
  border-bottom: 1px solid #ccc;
`;

const ZoomCaret = styled.span`
  font-size: 8px;
`;

const ToolsRight = styled.div`
  margin-left: auto;
  display: flex;
  align-items: center;
`;

const DocArea = styled.div`
  position: relative;
  flex: 1;
  min-height: 0;
  display: flex;
`;

const SideStrip = styled.div`
  width: 13px;
  flex: none;
  display: flex;
  align-items: center;
  justify-content: center;
  background: #efedef;
`;

const CollapseStrip = styled(SideStrip)`
  width: 15px;
  background: #e8e8e8;
  border-left: 1px solid #dcdcdc;
`;

const RailArrow = styled.span`
  font-size: 7px;
  color: #666;
  ${(p) => p.$left && 'font-size: 8px;'}
`;

const GreyGutter = styled.div`
  width: ${(p) => p.$w}px;
  flex: none;
  background: #9b9b9b;
`;

const Page = styled.div`
  position: relative;
  width: 855px;
  padding-left: 99px;
  flex: none;
  overflow: hidden;
  background: #fff;
  font-family: Lato, 'Open Sans', sans-serif;
  font-size: 14.500px;
  line-height: 19px;
  color: #111;
`;

const ClippedLine = styled.div`
  margin: -11px 0 0 57px;
`;

const PlainLine = styled.div`
  margin: 4px 0 0 57px;
`;

const QuestionF = styled.div`
  display: flex;
  width: 694px;
  margin: 26px 0 0 0;
  padding-left: 52px;
  font-weight: 700;
`;

const Mark = styled.span`
  width: 26px;
  flex: none;
`;

const LineBody = styled.div`
  flex: 1;
  font-size: 14.700px;
  text-align: justify;
  & b { font-size: 14.200px; }
`;

const BoldBody = styled.div`
  flex: 1;
  font-size: 14.900px;
  font-weight: 700;
  text-align: justify;
`;

const CodeImage = styled.div`
  width: 430px;
  height: 100px;
  margin: 26px 0 0 89px;
  display: flex;
  font-family: 'Liberation Mono', monospace;
  font-size: 20.400px;
  line-height: 23.300px;
`;

const CodeGutter = styled.div`
  width: 63px;
  padding: 6px 24px 0 0;
  flex: none;
  text-align: right;
  color: #999;
  background: #e4e4e4;
`;

const CodeText = styled.div`
  padding: 6px 0 0 1px;
  color: #555;
`;

const Keyword = styled.span`
  font-weight: 700;
  color: #1a1ae0;
`;

const Question = styled.div`
  display: flex;
  width: 694px;
  margin-top: 47px;
`;

const QNum = styled.b`
  width: 26px;
  flex: none;
`;

const SubList = styled.div`
  width: 694px;
  padding-left: 52px;
  line-height: 19.100px;
`;

const ListRow = styled.div`
  display: flex;
`;

const ConsoleShot = styled.div`
  width: 635px;
  height: 125px;
  margin: 66px 0 0 38px;
  display: flex;
  border-top: 1px solid #666;
`;

const ConsoleEdge = styled.div`
  width: 9px;
  flex: none;
  background: #eef4fa;
  border-left: 2px solid #555;
`;

const ConsoleScreen = styled.pre`
  width: 600px;
  margin: 0;
  padding: 9px 0 0 1px;
  flex: none;
  font-family: 'Liberation Mono', monospace;
  font-size: 12.400px;
  line-height: 11.200px;
  color: #e0e0e0;
  background: #000;
`;

const ConsoleGap = styled.div`
  width: 15px;
  flex: none;
  background: #eeeeee;
`;

const ConsoleScroll = styled.div`
  flex: 1;
  background: linear-gradient(to bottom, #eef4fa 0 27px, #b9d6f2 27px, #b9d6f2 60px, #6b7f92 90px, #b9d6f2 105px);
  border-left: 1px solid #333;
  border-right: 2px solid #333;
`;

const Cursor = styled.div`
  position: absolute;
  left: 625px;
  top: 497px;
  display: flex;
`;

const VScroll = styled.div`
  width: 13px;
  padding-top: 1px;
  flex: none;
  display: flex;
  flex-direction: column;
  align-items: center;
  background: #f0f0f0;
`;

const VThumb = styled.div`
  width: 100%;
  height: 59px;
  margin-top: 439px;
  background: #cdcdcd;
`;

const VBottom = styled.div`
  margin-top: auto;
  display: flex;
`;

const ToolsPanel = styled.div`
  flex: 1;
  padding-top: 9px;
  display: flex;
  flex-direction: column;
  align-items: center;
  background: #fdfdfe;
`;

const PanelRule = styled.div`
  width: 22px;
  height: 1px;
  margin: 8px 0 0;
  flex: none;
  background: #ccc;
`;

const PanelSlot = styled.div`
  height: 34.500px;
  flex: none;
  display: flex;
  align-items: center;
  justify-content: center;
`;

const PanelExit = styled.div`
  margin-top: auto;
  padding-bottom: 10px;
  display: flex;
`;

const ShareBar = styled.div`
  position: absolute;
  left: 424px;
  top: 626px;
  width: 411px;
  height: 31px;
  padding: 0 7px;
  display: flex;
  align-items: center;
  background: #fff;
  font-size: 8.700px;
  color: #444;
`;

const Grip = styled.span`
  width: 11px;
  color: #aaa;
`;

const ShareText = styled.span`
  width: 248px;
  white-space: nowrap;
`;

const StopShare = styled.div`
  width: 101px;
  height: 26px;
  flex: none;
  display: flex;
  align-items: center;
  justify-content: center;
  background: #0b6fde;
  border-radius: 2px;
  color: #fff;
  font-weight: 600;
`;

const HideShare = styled.span`
  margin-left: 8px;
  color: #4a8fe0;
`;

const InnerTaskbar = styled.div`
  height: 30px;
  flex: none;
  display: flex;
  align-items: stretch;
  background: #d3e1ee;
`;

const InnerStart = styled.div`
  width: 36px;
  display: flex;
  align-items: center;
  justify-content: center;
`;

const InnerSearch = styled.div`
  width: 257px;
  padding-left: 7px;
  display: flex;
  align-items: center;
  gap: 8px;
  font-size: 11px;
  color: #444;
  background: #fff;
`;

const MirrorIcon = styled.span`
  display: flex;
  transform: scaleX(-1);
`;

const InnerTaskView = styled.div`
  width: 37px;
  margin-right: 2px;
  display: flex;
  align-items: center;
  justify-content: center;
`;

const InnerApp = styled.div`
  width: 36.7px;
  padding: 0 3px;
  display: flex;
  align-items: center;
  justify-content: center;
  background: ${(p) => (p.$current ? '#e8eff6' : 'transparent')};
  box-shadow: ${(p) => (p.$open ? 'inset 0 -2px 0 #1a7fd4' : 'none')};
`;

const InnerTray = styled.div`
  margin-left: auto;
  padding-right: 16px;
  display: flex;
  align-items: center;
  border-right: 1px solid #667788;
`;

const TraySlot = styled.div`
  width: 18.200px;
  display: flex;
  justify-content: center;
`;

const InnerClock = styled.div`
  width: 50px;
  margin: 0 10px 0 1px;
  text-align: center;
  font-size: 8.500px;
  line-height: 14px;
  color: #444;
`;

const RightRail = styled.div`
  flex: 1;
  padding: 30px 30px 0 0;
  display: flex;
  justify-content: flex-end;
`;

const HdAvatar = styled.div`
  width: 40px;
  height: 40px;
  display: flex;
  align-items: center;
  justify-content: center;
  font-size: 12px;
  font-weight: 700;
  color: #eef2f8;
  background: #b9c8de;
  border-radius: 50%;
`;

const SideChevron = styled.div`
  position: absolute;
  right: 5px;
  bottom: 16px;
  display: flex;
`;

const Watermark = styled.div`
  position: absolute;
  left: 1258px;
  top: 704px;
  z-index: 3;
  font-family: 'Open Sans', sans-serif;
  color: rgba(172, 172, 172, 0.72);
  white-space: nowrap;
  pointer-events: none;
`;

const WatermarkTitle = styled.div`
  font-size: 19px;
  line-height: 26px;
`;

const WatermarkSub = styled.div`
  font-size: 14px;
  line-height: 18px;
`;

const Taskbar = styled.div`
  height: 40px;
  flex: none;
  display: flex;
  align-items: stretch;
  background: #1b1b1b;
`;

const StartButton = styled.div`
  width: 48px;
  display: flex;
  align-items: center;
  justify-content: center;
`;

const SearchBox = styled.div`
  width: 344px;
  padding-left: 13px;
  display: flex;
  align-items: center;
  gap: 9px;
  background: #f1f1f1;
`;

const SearchText = styled.span`
  font-size: 14.200px;
  color: #333;
`;

const BarIcon = styled.div`
  width: ${(p) => p.$w}px;
  display: flex;
  align-items: center;
  justify-content: center;
`;

const CortanaRing = styled.div`
  width: 17px;
  height: 17px;
  border: 3px solid #fff;
  border-radius: 50%;
`;

const BarApp = styled.div`
  width: ${(p) => p.$w}px;
  margin-left: ${(p) => p.$ml}px;
  display: flex;
  align-items: center;
  justify-content: center;
  background: ${(p) => (p.$current ? '#474747' : 'transparent')};
  box-shadow: ${(p) => (p.$line ? 'inset 0 -2px 0 #6fb1e8' : 'none')};
`;

const Tray = styled.div`
  margin-left: auto;
  padding-right: 5px;
  display: flex;
  align-items: center;
  gap: 9px;
`;

const Clock = styled.div`
  width: 56px;
  white-space: nowrap;
  text-align: center;
  font-size: 11.500px;
  line-height: 18px;
  color: #eee;
`;

const NotifBox = styled.div`
  width: 56px;
  margin-left: -9px;
  display: flex;
  justify-content: center;
  border-right: 1px solid #666;
`;
